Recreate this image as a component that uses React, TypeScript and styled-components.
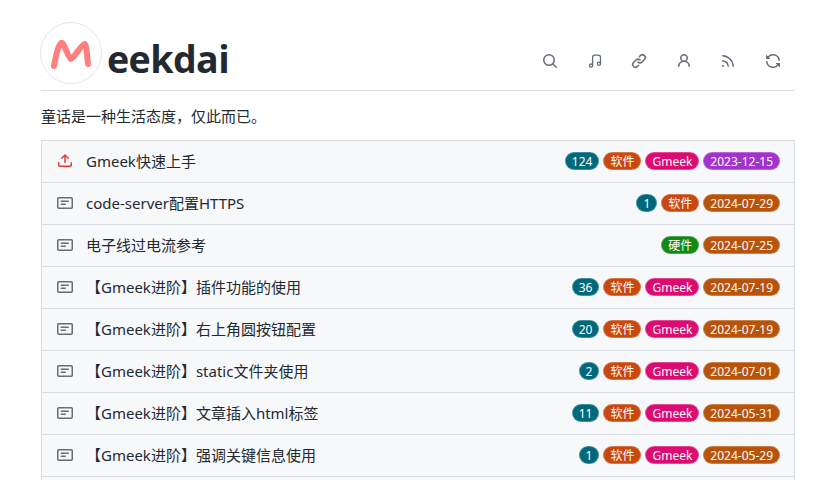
import React from "react";
import styled, { createGlobalStyle } from "styled-components";

const GlobalStyle = createGlobalStyle`
  html, body {
    margin: 0;
    height: 480px;
    overflow: hidden;
    background: #fff;
  }
  body {
    font-family: "Noto Sans", "Noto Sans CJK SC", sans-serif;
    font-size: 15px;
    color: #24292f;
  }
`;

const Page = styled.div`
  padding: 22px 24px 0 41px;
`;

const Header = styled.header`
  display: flex;
  align-items: center;
  justify-content: space-between;
  height: 68px;
  border-bottom: 1px solid #d8dee4;
`;

const Brand = styled.div`
  display: flex;
  align-items: flex-end;
  height: 62px;
  margin-top: -6px;
  margin-left: -1px;
`;

const Avatar = styled.div`
  width: 60px;
  height: 60px;
  border: 1px solid #e4e6ea;
  border-radius: 50%;
  background: #fff;
  flex: none;
`;

const BrandName = styled.h1`
  margin: 0 0 3px 5px;
  font-family: "Open Sans", sans-serif;
  font-size: 37.6px;
  line-height: 44px;
  font-weight: 700;
  letter-spacing: -0.6px;
  color: #24292f;
`;

const Toolbar = styled.nav`
  display: flex;
  align-items: center;
  gap: 28.6px;
  margin-right: 14px;
  margin-top: 10px;
`;

const ToolIcon = styled.svg`
  width: 16px;
  height: 16px;
  display: block;
  fill: #656d76;
`;

const MusicIcon = styled(ToolIcon)`
  fill: none;
  stroke: #656d76;
  stroke-width: 1.3;
  stroke-linecap: round;
  stroke-linejoin: round;
`;

const Tagline = styled.p`
  margin: 0;
  padding-top: 16px;
  height: 33px;
  line-height: 18px;
  color: #24292f;
`;

const List = styled.ul`
  list-style: none;
  margin: 0;
  padding: 0;
  border: 1px solid #d8dee4;
  border-bottom: none;
  background: #f6f8fa;
`;

const Row = styled.li`
  display: flex;
  align-items: center;
  height: 40px;
  padding: 0 14px 1px 15px;
  border-bottom: 1px solid #d8dee4;
`;

const RowIcon = styled.svg<{ $tone?: string }>`
  width: 16px;
  height: 16px;
  flex: none;
  fill: ${(p) => p.$tone || "#656d76"};
`;

const Title = styled.span`
  margin-left: 13px;
  flex: 1;
  line-height: 20px;
  white-space: nowrap;
  color: #24292f;
`;

const Labels = styled.div`
  display: flex;
  gap: 4px;
`;

const Label = styled.span<{ $bg: string }>`
  box-sizing: border-box;
  display: inline-flex;
  align-items: center;
  height: 18px;
  padding: 0 6px;
  border: 1px solid rgba(255, 255, 255, 0.25);
  border-radius: 9px;
  background: ${(p) => p.$bg};
  color: #fff;
  font-size: 12px;
  white-space: nowrap;
`;

const TEAL = "#00687a";
const SOFT = "#c9480f";
const GMEEK = "#dc0b72";
const HARD = "#118a14";
const PURPLE = "#a133cc";
const ORANGE = "#b8530b";

const NOTE =
  "M0 3.75C0 2.784.784 2 1.75 2h12.5c.966 0 1.75.784 1.75 1.75v8.5A1.75 1.75 0 0 1 14.25 14H1.75A1.75 1.75 0 0 1 0 12.25Zm1.75-.25a.25.25 0 0 0-.25.25v8.5c0 .138.112.25.25.25h12.5a.25.25 0 0 0 .25-.25v-8.5a.25.25 0 0 0-.25-.25ZM3.5 6.25a.75.75 0 0 1 .75-.75h7a.75.75 0 0 1 0 1.5h-7a.75.75 0 0 1-.75-.75Zm.75 2.25h4a.75.75 0 0 1 0 1.5h-4a.75.75 0 0 1 0-1.5Z";
const UPLOAD =
  "M2.75 14A1.75 1.75 0 0 1 1 12.25v-2.5a.75.75 0 0 1 1.5 0v2.5c0 .138.112.25.25.25h10.5a.25.25 0 0 0 .25-.25v-2.5a.75.75 0 0 1 1.5 0v2.5A1.75 1.75 0 0 1 13.25 14ZM11.78 4.72a.749.749 0 1 1-1.06 1.06L8.75 3.811V9.5a.75.75 0 0 1-1.5 0V3.811L5.28 5.78a.749.749 0 1 1-1.06-1.06l3.25-3.25a.749.749 0 0 1 1.06 0l3.25 3.25Z";

const SEARCH =
  "M10.68 11.74a6 6 0 0 1-7.922-8.982 6 6 0 0 1 8.982 7.922l3.04 3.04a.749.749 0 0 1-.326 1.275.749.749 0 0 1-.734-.215ZM11.5 7a4.499 4.499 0 1 0-8.997 0A4.499 4.499 0 0 0 11.5 7Z";
const afterMusic = [
  "m7.775 3.275 1.25-1.25a3.5 3.5 0 1 1 4.95 4.95l-2.5 2.5a3.5 3.5 0 0 1-4.95 0 .751.751 0 0 1 .018-1.042.751.751 0 0 1 1.042-.018 1.998 1.998 0 0 0 2.83 0l2.5-2.5a2.002 2.002 0 0 0-2.83-2.83l-1.25 1.25a.751.751 0 0 1-1.042-.018.751.751 0 0 1-.018-1.042Zm-4.69 9.64a1.998 1.998 0 0 0 2.83 0l1.25-1.25a.751.751 0 0 1 1.042.018.751.751 0 0 1 .018 1.042l-1.25 1.25a3.5 3.5 0 1 1-4.95-4.95l2.5-2.5a3.5 3.5 0 0 1 4.95 0 .751.751 0 0 1-.018 1.042.751.751 0 0 1-1.042.018 1.998 1.998 0 0 0-2.83 0l-2.5 2.5a1.998 1.998 0 0 0 0 2.83Z",
  "M10.561 8.073a6.005 6.005 0 0 1 3.432 5.142.75.75 0 1 1-1.498.07 4.5 4.5 0 0 0-8.99 0 .75.75 0 0 1-1.498-.07 6.004 6.004 0 0 1 3.431-5.142 3.999 3.999 0 1 1 5.123 0ZM10.5 5a2.5 2.5 0 1 0-5 0 2.5 2.5 0 0 0 5 0Z",
  "M2.002 2.725a.75.75 0 0 1 .797-.699C8.79 2.42 13.58 7.21 13.974 13.201a.75.75 0 0 1-1.497.098 10.502 10.502 0 0 0-9.776-9.776.747.747 0 0 1-.7-.798ZM2.84 7.05h-.002a7.002 7.002 0 0 1 6.113 6.111.75.75 0 0 1-1.49.178 5.503 5.503 0 0 0-4.8-4.8.75.75 0 0 1 .179-1.489ZM2 13a1 1 0 1 1 2 0 1 1 0 0 1-2 0Z",
  "M1.705 8.005a.75.75 0 0 1 .834.656 5.5 5.5 0 0 0 9.592 2.97l-1.204-1.204a.25.25 0 0 1 .177-.427h3.646a.25.25 0 0 1 .25.25v3.646a.25.25 0 0 1-.427.177l-1.38-1.38A7.002 7.002 0 0 1 1.05 8.84a.75.75 0 0 1 .656-.834ZM8 2.5a5.487 5.487 0 0 0-4.131 1.869l1.204 1.204A.25.25 0 0 1 4.896 6H1.25A.25.25 0 0 1 1 5.75V2.104a.25.25 0 0 1 .427-.177l1.38 1.38A7.002 7.002 0 0 1 14.95 7.16a.75.75 0 0 1-1.49.178A5.5 5.5 0 0 0 8 2.5Z",
];

type Post = {
  title: string;
  pinned?: boolean;
  labels: [string, string][];
};

const posts: Post[] = [
  {
    title: "Gmeek快速上手",
    pinned: true,
    labels: [["124", TEAL], ["软件", SOFT], ["Gmeek", GMEEK], ["2023-12-15", PURPLE]],
  },
  {
    title: "code-server配置HTTPS",
    labels: [["1", TEAL], ["软件", SOFT], ["2024-07-29", ORANGE]],
  },
  {
    title: "电子线过电流参考",
    labels: [["硬件", HARD], ["2024-07-25", ORANGE]],
  },
  {
    title: "【Gmeek进阶】插件功能的使用",
    labels: [["36", TEAL], ["软件", SOFT], ["Gmeek", GMEEK], ["2024-07-19", ORANGE]],
  },
  {
    title: "【Gmeek进阶】右上角圆按钮配置",
    labels: [["20", TEAL], ["软件", SOFT], ["Gmeek", GMEEK], ["2024-07-19", ORANGE]],
  },
  {
    title: "【Gmeek进阶】static文件夹使用",
    labels: [["2", TEAL], ["软件", SOFT], ["Gmeek", GMEEK], ["2024-07-01", ORANGE]],
  },
  {
    title: "【Gmeek进阶】文章插入html标签",
    labels: [["11", TEAL], ["软件", SOFT], ["Gmeek", GMEEK], ["2024-05-31", ORANGE]],
  },
  {
    title: "【Gmeek进阶】强调关键信息使用",
    labels: [["1", TEAL], ["软件", SOFT], ["Gmeek", GMEEK], ["2024-05-29", ORANGE]],
  },
];

export default function App() {
  return (
    <Page>
      <GlobalStyle />
      <Header>
        <Brand>
          <Avatar>
            <svg width="60" height="60" viewBox="0 0 60 60" fill="none">
              <path
                d="M13 43C15 33 16 24 20 20C23 18 27 35 30 36C33 36 40 21 44 21C46 23 46 33 47 41"
                stroke="#ff7f7f"
                strokeWidth="6"
                strokeLinecap="round"
                strokeLinejoin="round"
              />
            </svg>
          </Avatar>
          <BrandName>eekdai</BrandName>
        </Brand>
        <Toolbar>
          <ToolIcon viewBox="0 0 16 16">
            <path d={SEARCH} />
          </ToolIcon>
          <MusicIcon viewBox="0 0 16 16">
            <path d="M5.6 12.4V4.4C5.6 3 6.5 2.2 7.8 2.2H11.2C12.6 2.2 13.5 3 13.5 4.4V10.6" />
            <circle cx="4" cy="12.6" r="1.6" />
            <circle cx="11.9" cy="10.8" r="1.6" />
          </MusicIcon>
          {afterMusic.map((d) => (
            <ToolIcon key={d} viewBox="0 0 16 16">
              <path d={d} />
            </ToolIcon>
          ))}
        </Toolbar>
      </Header>
      <Tagline>童话是一种生活态度，仅此而已。</Tagline>
      <List>
        {posts.map((post) => (
          <Row key={post.title}>
            <RowIcon viewBox="0 0 16 16" $tone={post.pinned ? "#e23b3b" : undefined}>
              <path d={post.pinned ? UPLOAD : NOTE} />
            </RowIcon>
            <Title>{post.title}</Title>
            <Labels>
              {post.labels.map(([text, color]) => (
                <Label key={text} $bg={color}>
                  {text}
                </Label>
              ))}
            </Labels>
          </Row>
        ))}
        <Row />
      </List>
    </Page>
  );
}
